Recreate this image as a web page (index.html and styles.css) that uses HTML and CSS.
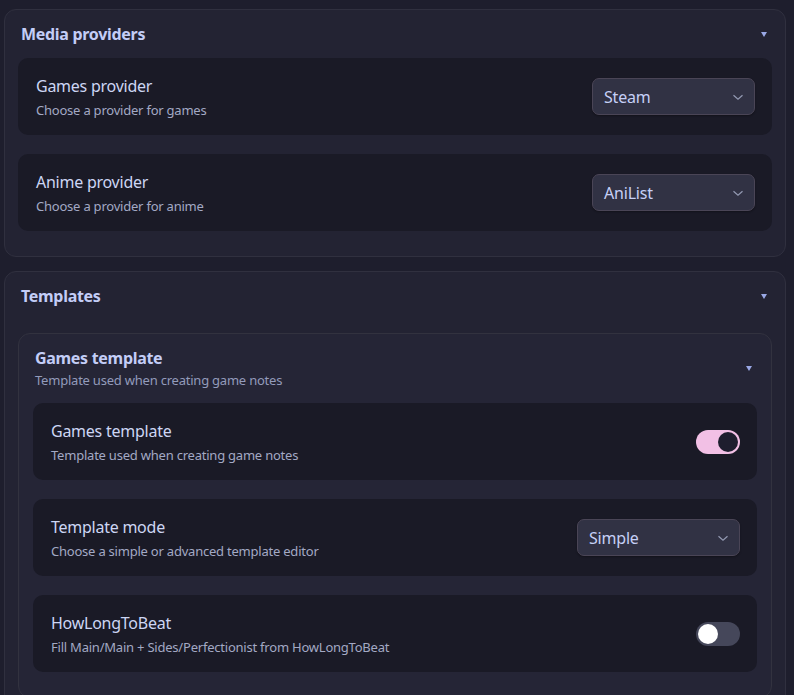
FILE: index.html
```html
<!DOCTYPE html>
<html lang="en">

<head>
	<meta charset="UTF-8">
	<title>Media settings</title>
	<link rel="stylesheet" href="styles.css">
</head>

<body>
	<section class="group">
		<div class="group-head">
			<h2>Media providers</h2>
			<span class="caret"></span>
		</div>
		<div class="group-body">
			<div class="setting">
				<div class="setting-info">
					<div class="setting-name">Games provider</div>
					<div class="setting-desc">Choose a provider for games</div>
				</div>
				<div class="dropdown">
					<span>Steam</span>
					<svg width="12" height="12" viewBox="0 0 12 12"><path d="M1.5 4.2 L6 8.2 L10.5 4.2" /></svg>
				</div>
			</div>
			<div class="setting">
				<div class="setting-info">
					<div class="setting-name">Anime provider</div>
					<div class="setting-desc">Choose a provider for anime</div>
				</div>
				<div class="dropdown">
					<span>AniList</span>
					<svg width="12" height="12" viewBox="0 0 12 12"><path d="M1.5 4.2 L6 8.2 L10.5 4.2" /></svg>
				</div>
			</div>
		</div>
	</section>

	<section class="group">
		<div class="group-head group-head-wide">
			<h2>Templates</h2>
			<span class="caret"></span>
		</div>
		<div class="subgroup">
			<div class="subgroup-head">
				<div>
					<h3>Games template</h3>
					<div class="subgroup-desc">Template used when creating game notes</div>
				</div>
				<span class="caret"></span>
			</div>
			<div class="group-body">
				<div class="setting">
					<div class="setting-info">
						<div class="setting-name">Games template</div>
						<div class="setting-desc">Template used when creating game notes</div>
					</div>
					<div class="toggle on"><span class="knob"></span></div>
				</div>
				<div class="setting">
					<div class="setting-info">
						<div class="setting-name">Template mode</div>
						<div class="setting-desc">Choose a simple or advanced template editor</div>
					</div>
					<div class="dropdown">
						<span>Simple</span>
						<svg width="12" height="12" viewBox="0 0 12 12"><path d="M1.5 4.2 L6 8.2 L10.5 4.2" /></svg>
					</div>
				</div>
				<div class="setting">
					<div class="setting-info">
						<div class="setting-name">HowLongToBeat</div>
						<div class="setting-desc">Fill Main/Main + Sides/Perfectionist from HowLongToBeat</div>
					</div>
					<div class="toggle"><span class="knob"></span></div>
				</div>
			</div>
		</div>
	</section>
</body>

</html>
```

FILE: styles.css
```css
body {
    font-family: "Noto Sans", "Open Sans", sans-serif;
    background-color: #1e1e2d;
    color: #cdd6f4;
    margin: 0;
    padding: 9px 8px 0 4px;
    height: 695px;
    overflow: hidden;
    box-sizing: border-box;
}
.group {
    background-color: #232333;
    border: 1px solid #30303f;
    border-radius: 12px;
    padding: 14px 13px 25px;
    margin-bottom: 14px;
}
.group-head {
    display: flex;
    justify-content: space-between;
    align-items: center;
    height: 20px;
    padding: 0 5px 0 3px;
    margin-bottom: 14px;
}
.group-head-wide {
    margin-bottom: 27px;
}
h2, h3 {
    margin: 0;
    font-size: 16px;
    font-weight: 700;
    line-height: 20px;
    letter-spacing: -0.3px;
    color: #c3cdf7;
}
.caret {
    width: 0;
    height: 0;
    border-left: 3px solid transparent;
    border-right: 3px solid transparent;
    border-top: 5px solid #9aa8e6;
}
.group-body {
    display: flex;
    flex-direction: column;
    gap: 19px;
}
.setting {
    background-color: #1a1a26;
    border-radius: 10px;
    height: 77px;
    box-sizing: border-box;
    padding: 2px 17px 0 18px;
    display: flex;
    align-items: center;
    justify-content: space-between;
}
.setting-name {
    font-size: 16px;
    line-height: 20px;
    letter-spacing: -0.25px;
    color: #cdd6f4;
}
.setting-desc {
    font-size: 13px;
    line-height: 18px;
    margin-top: 5px;
    letter-spacing: -0.22px;
    color: #a3a9c4;
}
.dropdown {
    width: 163px;
    height: 37px;
    margin-top: -2px;
    box-sizing: border-box;
    background-color: #313244;
    border: 1px solid #4a4556;
    border-radius: 7px;
    padding: 0 10px 0 11px;
    display: flex;
    align-items: center;
    justify-content: space-between;
    font-size: 16px;
    letter-spacing: -0.2px;
    color: #c6d0f7;
    box-shadow: 0 1px 2px rgba(0,0,0,0.3);
}
.dropdown svg path {
    fill: none;
    stroke: #9399b2;
    stroke-width: 1.2;
}
.subgroup {
    background-color: #252536;
    border: 1px solid #32323f;
    border-radius: 12px;
    padding: 14px 14px 25px;
}
.subgroup-head {
    display: flex;
    justify-content: space-between;
    align-items: center;
    padding: 0 5px 0 2px;
    margin-bottom: 14px;
}
.subgroup-desc {
    font-size: 13px;
    line-height: 18px;
    margin-top: 3px;
    letter-spacing: -0.22px;
    color: #939bbb;
}
.toggle {
    width: 44px;
    height: 24px;
    margin-top: -2px;
    border-radius: 12px;
    background-color: #45475a;
    padding: 2px;
    box-sizing: border-box;
    display: flex;
}
.toggle .knob {
    width: 20px;
    height: 20px;
    border-radius: 50%;
    background-color: #ffffff;
}
.toggle.on {
    background-color: #f2c0e5;
    justify-content: flex-end;
}
.toggle.on .knob {
    background-color: #1e1e2e;
}
```
